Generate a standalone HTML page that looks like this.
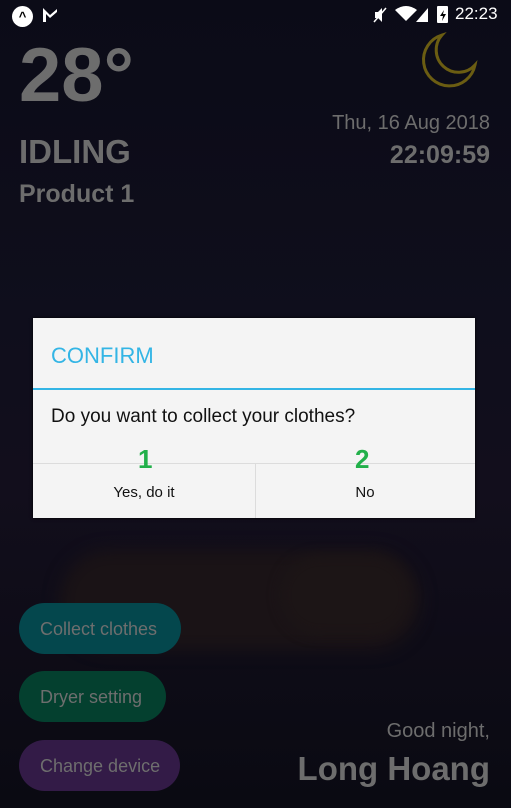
<!DOCTYPE html>
<html><head><meta charset="utf-8"><style>
*{margin:0;padding:0;box-sizing:border-box}
body{width:511px;height:808px;overflow:hidden;background:#0c0b16;font-family:"Liberation Sans",sans-serif;position:relative}
.a{position:absolute;white-space:nowrap}
.g{color:#6d6d6d}
.btn{position:absolute;left:19px;height:51px;border-radius:26px;color:#6e6e6e;font-size:18px;line-height:53px;padding-left:21px}
</style></head><body>
<div class="a" style="left:0;top:0;width:511px;height:808px;background:linear-gradient(#0b0b17 0%,#0f0e1c 40%,#120e1c 60%,#0a0a12 100%)"></div>
<div class="a" style="left:60px;top:550px;width:360px;height:100px;border-radius:50px;background:#1a1316;filter:blur(8px)"></div>
<div class="a" style="left:280px;top:555px;width:130px;height:80px;border-radius:40px;background:#1c1516;filter:blur(6px)"></div>
<!-- status bar -->
<div class="a" style="left:12px;top:6px;width:21px;height:21px;border-radius:50%;background:#fff;color:#000;font-size:13px;font-weight:bold;text-align:center;line-height:22px">^</div>
<svg class="a" style="left:42px;top:6px" width="16" height="18"><path d="M1 2 L8 9 L15 3 L15 6 L8 12 L4 8 L4 16 L1 16Z" fill="#fff"/></svg>
<svg class="a" style="left:372px;top:6px" width="16" height="18"><path d="M3 6h3l4-4v14l-4-4H3z" fill="#fff"/><path d="M2 16L14 2" stroke="#fff" stroke-width="1.5"/></svg>
<svg class="a" style="left:395px;top:6px" width="22" height="16"><path d="M11 15L0 4Q11-4 22 4z" fill="#fff"/></svg>
<svg class="a" style="left:416px;top:6px" width="14" height="16"><path d="M0 16L12 2V16z" fill="#fff"/></svg>
<div class="a" style="left:437px;top:6px;width:11px;height:17px;background:#fff;border-radius:1px"></div>
<svg class="a" style="left:437px;top:8px" width="11" height="15"><path d="M7 2L3 8h3l-1 5 4-7H6z" fill="#000"/></svg>
<div class="a" style="left:455px;top:4px;color:#fff;font-size:17px">22:23</div>
<!-- header -->
<div class="a g" style="left:19px;top:34px;font-size:76px;font-weight:bold;line-height:84px">28°</div>
<div class="a g" style="left:19px;top:133px;font-size:33px;font-weight:bold">IDLING</div>
<div class="a g" style="left:19px;top:180px;font-size:25px;font-weight:bold">Product 1</div>
<svg class="a" style="left:418px;top:32px" width="60" height="60"><path d="M24 3 A26 26 0 1 0 57 33 A21 21 0 0 1 24 3Z" fill="none" stroke="#6b5d12" stroke-width="3"/></svg>
<div class="a g" style="right:21px;top:112px;font-size:20px">Thu, 16 Aug 2018</div>
<div class="a g" style="right:21px;top:141px;font-size:25px;font-weight:bold">22:09:59</div>
<!-- buttons -->
<div class="btn" style="top:603px;width:162px;background:#04474d">Collect clothes</div>
<div class="btn" style="top:671px;width:147px;background:#04402f">Dryer setting</div>
<div class="btn" style="top:740px;width:161px;background:#331b47">Change device</div>
<div class="a g" style="right:21px;top:720px;font-size:20px">Good night,</div>
<div class="a g" style="right:21px;top:750px;font-size:33px;font-weight:bold">Long Hoang</div>
<!-- dialog -->
<div class="a" style="left:33px;top:318px;width:442px;height:200px;background:#f4f4f4;box-shadow:0 0 3px #000">
 <div class="a" style="left:18px;top:25px;font-size:22px;color:#33b5e5">CONFIRM</div>
 <div class="a" style="left:0;top:70px;width:442px;height:2px;background:#33b5e5"></div>
 <div class="a" style="left:18px;top:88px;font-size:19px;color:#111">Do you want to collect your clothes?</div>
 <div class="a" style="left:0;top:145px;width:442px;height:1px;background:#dcdcdc"></div>
 <div class="a" style="left:222px;top:145px;width:1px;height:55px;background:#dcdcdc"></div>
 <div class="a" style="left:0;top:166px;width:222px;text-align:center;font-size:15px;color:#111">Yes, do it</div>
 <div class="a" style="left:222px;top:166px;width:220px;text-align:center;font-size:15px;color:#111">No</div>
 <div class="a" style="left:105px;top:126px;font-size:26px;font-weight:bold;color:#22b04a">1</div>
 <div class="a" style="left:322px;top:126px;font-size:26px;font-weight:bold;color:#22b04a">2</div>
</div>
</body></html>
